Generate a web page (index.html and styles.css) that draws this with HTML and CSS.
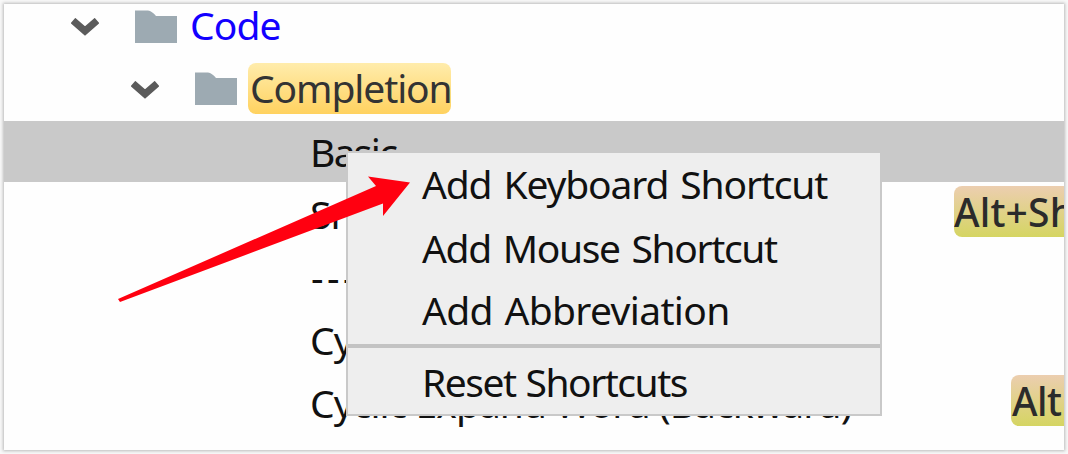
FILE: index.html
```html
<!DOCTYPE html>
<html lang="en">
<head>
<meta charset="utf-8">
<title>Keymap</title>
<link rel="stylesheet" href="styles.css">
</head>
<body>
<main class="panel">
  <div class="tree">
    <div class="row level-1">
      <svg class="chevron" viewBox="0 0 28 18"><path d="M2 2.5 L14 13 L26 2.5"/></svg>
      <svg class="folder" viewBox="0 0 44 34"><path d="M1 0.5H14Q18 1 22 6H43V33H1Z"/></svg>
      <span class="label code">Code</span>
    </div>
    <div class="row level-2">
      <svg class="chevron" viewBox="0 0 28 18"><path d="M2 2.5 L14 13 L26 2.5"/></svg>
      <svg class="folder" viewBox="0 0 44 34"><path d="M1 0.5H14Q18 1 22 6H43V33H1Z"/></svg>
      <span class="label match">Completion</span>
    </div>
    <div class="row leaf selected"><span class="label basic">Basic</span></div>
    <div class="row leaf"><span class="label">Smart</span><span class="key wide">Alt+Shift</span></div>
    <div class="row leaf"><span class="label dashes">---</span></div>
    <div class="row leaf"><span class="label">Cyclic</span></div>
    <div class="row leaf"><span class="label backward">Cyclic Expand Word (Backward)</span><span class="key narrow">Alt</span></div>
  </div>
</main>
<div class="menu">
  <div class="item keyboard">Add Keyboard Shortcut</div>
  <div class="item mouse">Add Mouse Shortcut</div>
  <div class="item abbr">Add Abbreviation</div>
  <div class="divider"></div>
  <div class="item reset">Reset Shortcuts</div>
</div>
<svg class="arrow" viewBox="0 0 292 126"><path d="M0 121 L258 8 L250 -1.5 L292 4.5 L265 38 L265 25.5 L2 124 Z"/></svg>
</body>
</html>
```
FILE: styles.css
```css
* { box-sizing: border-box; }
body {
  margin: 0;
  padding: 4px;
  width: 1068px;
  height: 454px;
  overflow: hidden;
  background: #f8f8f8;
  font: 39px "Noto Sans", sans-serif;
  color: #111;
}
.panel {
  width: 1060px;
  height: 446px;
  overflow: hidden;
  background: #fefefe;
  box-shadow: 0 0 3px 1px #bbb;
}
.tree { margin-top: -10px; }
.row {
  display: flex;
  align-items: center;
  height: 63px;
  white-space: nowrap;
}
.level-1 { padding-left: 67px; }
.level-2 { padding-left: 127px; height: 64px; }
.leaf { padding-left: 306px; }
.selected { height: 61px; background: #c9c9c9; }
.chevron { width: 28px; height: 18px; flex: none; margin: 2px 35px 0 0; }
.chevron path { fill: none; stroke: #5b5b5b; stroke-width: 7; }
.folder { width: 44px; height: 34px; flex: none; margin-right: 10px; }
.folder path { fill: #9daab2; }
.level-1 .folder { margin-top: 2px; }
.label { line-height: 51px; height: 51px; letter-spacing: -0.96px; }
.code { margin: -2px 0 0 2px; color: #1300ff; letter-spacing: -0.9px; }
.match {
  margin-top: -2px;
  padding-left: 2px;
  width: 203px;
  border-radius: 8px;
  background: linear-gradient(#ffecac, #ffd25f);
  color: #333;
  line-height: 50px;
  letter-spacing: -1.1px;
}
.basic { letter-spacing: -1.7px; }
.dashes { padding-left: 1px; letter-spacing: 3.5px; }
.key {
  margin: -4px 0 0 auto;
  height: 51px;
  line-height: 52px;
  flex: none;
  border-radius: 8px 0 0 8px;
  background: linear-gradient(#ecceb0, #d5d562);
  color: #2b2b2b;
  font-weight: 500;
  overflow: hidden;
}
.wide { width: 110px; letter-spacing: 0.2px; }
.narrow { width: 53px; padding-left: 1px; letter-spacing: -0.6px; }
.menu {
  position: absolute;
  left: 346px;
  top: 151px;
  width: 536px;
  height: 265px;
  border: 2px solid #c9c9c9;
  background: #eee;
}
.item {
  padding-left: 74px;
  line-height: 61px;
  white-space: nowrap;
}
.keyboard { height: 64px; letter-spacing: -1.15px; word-spacing: 3px; }
.mouse { height: 62px; letter-spacing: -1.35px; word-spacing: 3px; }
.abbr { height: 65px; letter-spacing: -0.65px; word-spacing: 2px; }
.reset { height: 66px; line-height: 67px; letter-spacing: -1.5px; word-spacing: 1.4px; }
.divider { height: 4px; background: #c3c3c3; }
.arrow {
  position: absolute;
  left: 118px;
  top: 178px;
  width: 292px;
  height: 126px;
  overflow: visible;
}
.arrow path { fill: #ff0010; }
```
